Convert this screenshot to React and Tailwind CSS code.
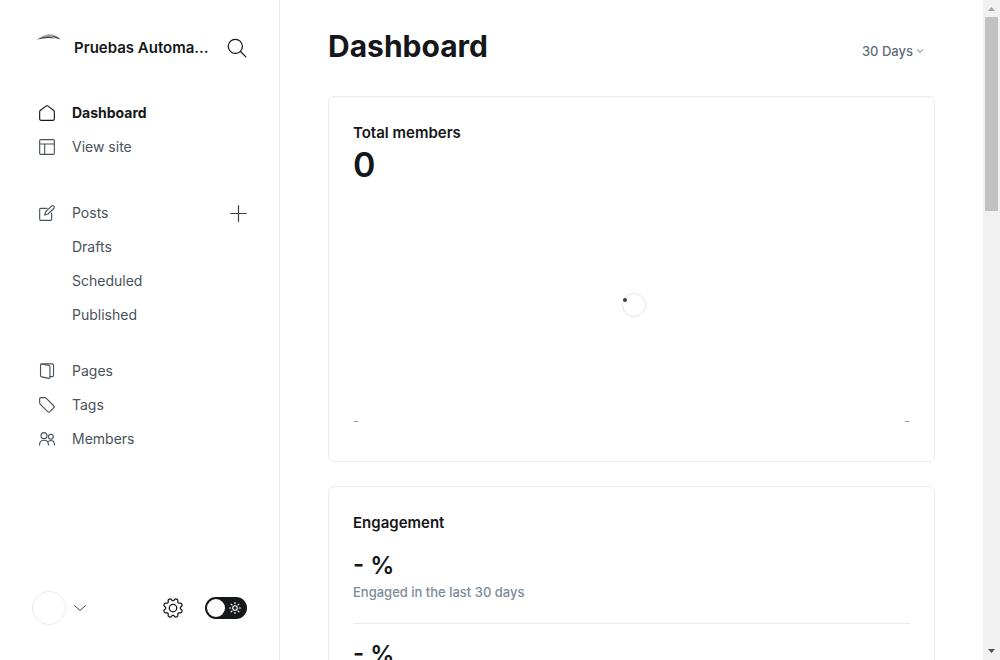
import React from "react";

function Icon({ className, children, strokeWidth = 1.5 }) {
  return (
    <svg
      viewBox="0 0 24 24"
      className={className}
      fill="none"
      stroke="currentColor"
      strokeWidth={strokeWidth}
      strokeLinecap="round"
      strokeLinejoin="round"
      aria-hidden="true"
    >
      {children}
    </svg>
  );
}

// Outline of a cog with eight rounded teeth, centred in a 24-unit box.
function cogPath() {
  const points = [];
  for (let i = 0; i < 160; i++) {
    const a = (i / 160) * Math.PI * 2;
    const r = 10.1 + 1.4 * Math.tanh(1.8 * Math.cos(8 * (a - Math.PI / 8)) + 0.3);
    points.push(`${(12 + r * Math.cos(a)).toFixed(2)} ${(12 + r * Math.sin(a)).toFixed(2)}`);
  }
  return `M${points.join("L")}z`;
}

const icons = {
  home: (
    <path d="M1 9.800v11.300c0 1 .8 1.900 1.900 1.900h18.200c1 0 1.900-.8 1.900-1.900V9.800c0-.6-.3-1.200-.8-1.500L13 1.300a1.800 1.800 0 0 0-2 0L1.800 8.300c-.5.300-.8.900-.8 1.500z" />
  ),
  site: (
    <>
      <rect x="1" y="1" width="22" height="22" rx="1.500" />
      <path d="M1 7.500h22M8.500 7.500V23" />
    </>
  ),
  posts: (
    <>
      <path d="M12 5H2.500A1.500 1.500 0 0 0 1 6.500v15A1.500 1.500 0 0 0 2.500 23h15a1.500 1.500 0 0 0 1.500-1.500V12" />
      <path d="m13.500 13.500-5 1.500 1.500-5L18.700 1.700a2.400 2.400 0 0 1 3.500 0 2.400 2.400 0 0 1 0 3.500z" />
    </>
  ),
  pages: (
    <>
      <path d="M3.800 1.500 14.500 3.600c1.100.2 1.900 1.100 1.900 2.200v15.500c0 1.100-.9 1.900-2 1.700L4 20.800a2 2 0 0 1-1.700-2V2.800c0-.9.700-1.500 1.500-1.300z" />
      <path d="M3.800 1.300h16a2 2 0 0 1 2 2v15.200a2 2 0 0 1-2 2h-3.400" />
    </>
  ),
  tags: (
    <path d="M1 2.500v6.300c0 .7.300 1.300.7 1.800L13.500 22.300c.7.700 1.800.7 2.500 0l6.300-6.300c.7-.7.7-1.800 0-2.500L10.600 1.700A2.500 2.500 0 0 0 8.800 1H2.500A1.500 1.500 0 0 0 1 2.500z" />
  ),
  members: (
    <>
      <circle cx="7.500" cy="7" r="4.500" />
      <circle cx="17.800" cy="8.500" r="3.600" />
      <path d="M.8 21c0-4.500 2.800-7.200 6.700-7.200s6.700 2.700 6.700 7.200M14.500 15.500c1-.8 2-1.200 3.300-1.200 3.100 0 5.400 2.400 5.400 6.700" />
    </>
  ),
};

function NavItem({ icon, label, active }) {
  return (
    <a
      href="#"
      aria-current={active ? "page" : undefined}
      className={
        active
          ? "flex h-[34px] items-center text-sm font-bold text-[#15171a]"
          : "flex h-[34px] items-center text-sm text-[#4a525a]"
      }
    >
      <span className="mr-4 flex w-[18px] shrink-0 justify-center">
        {icon && (
          <Icon className="size-4" strokeWidth={1.7}>
            {icons[icon]}
          </Icon>
        )}
      </span>
      {label}
    </a>
  );
}

function Sidebar() {
  return (
    <aside className="flex w-[280px] shrink-0 flex-col border-r border-[#e6e9eb] pt-8 pb-[35px]">
      <div className="flex h-8 items-center pr-8 pl-9">
        <svg viewBox="0 0 26 26" className="mr-3 size-[26px] shrink-0 overflow-visible" aria-hidden="true">
          <path d="M1 3.500C5 .5 9-1.500 13-2c5 .2 9 2 11.500 5-4-1.500-7-2-10.500-1.800C9 1.500 5 2.500 1 3.500z" transform="translate(0 1)" fill="#a9adad" />
          <path d="M1 4.500c4-2.300 8-3.300 12-3 2 .2 4 .9 6 2.300-3-.6-6-.9-9-.6-3 .3-6 .7-9 1.300zM15 .8c4 0 7 1.500 9.500 3.700-3-.5-6.500-1.700-9.500-3.700z" fill="#4d4f50" />
        </svg>
        <span className="min-w-0 flex-1 truncate text-[15px] font-semibold text-[#15171a]">
          Pruebas Automatizadas
        </span>
        <button type="button" aria-label="Search" className="ml-4 text-[#15171a]">
          <Icon className="size-5">
            <circle cx="10" cy="10" r="8.500" />
            <path d="m16.200 16.200 6.500 6.500" />
          </Icon>
        </button>
      </div>
      <nav className="flex flex-1 flex-col pt-8 pr-8 pl-[38px]">
        <NavItem icon="home" label="Dashboard" active />
        <NavItem icon="site" label="View site" />
        <div className="mt-8 flex items-center justify-between">
          <NavItem icon="posts" label="Posts" />
          <a href="#" aria-label="New post" className="text-[#394047]">
            <Icon className="size-[17px]" strokeWidth={1.7}>
              <path d="M12 1v22M1 12h22" />
            </Icon>
          </a>
        </div>
        <NavItem label="Drafts" />
        <NavItem label="Scheduled" />
        <NavItem label="Published" />
        <div className="mt-[22px] flex flex-col">
          <NavItem icon="pages" label="Pages" />
          <NavItem icon="tags" label="Tags" />
          <NavItem icon="members" label="Members" />
        </div>
      </nav>
      <div className="flex items-center px-8">
        <button type="button" aria-label="Account menu" className="flex items-center gap-2">
          <span className="size-[34px] rounded-full border border-[#e9ebed]" />
          <Icon className="size-3 text-[#394047]" strokeWidth={2}>
            <path d="m1 7 11 10L23 7" />
          </Icon>
        </button>
        <a href="#" aria-label="Settings" className="mr-[22px] ml-auto text-[#15171a]">
          <Icon className="size-5">
            <circle cx="12" cy="12" r="4.500" />
            <path d={cogPath()} />
          </Icon>
        </a>
        <label className="relative flex h-[22px] w-[42px] cursor-pointer items-center justify-between rounded-full bg-[#15171a] px-[2px]">
          <input type="checkbox" aria-label="Night mode" className="absolute inset-0 cursor-pointer appearance-none rounded-full" />
          <span className="size-[18px] rounded-full bg-white" />
          <Icon className="mr-1 size-3 text-white" strokeWidth={2.3}>
            <circle cx="12" cy="12" r="4.500" />
            <path d="M12 1v2.500M12 20.500V23M1 12h2.500M20.500 12H23M4.200 4.200 6 6M18 18l1.800 1.800M4.200 19.800 6 18M18 6l1.800-1.800" />
          </Icon>
        </label>
      </div>
    </aside>
  );
}

function Card({ title, children }) {
  return (
    <section className="rounded-md border border-[#e9ebed] p-6">
      <h2 className="text-[15px] leading-6 font-semibold">{title}</h2>
      {children}
    </section>
  );
}

function Stat({ value, label }) {
  return (
    <div className="border-b border-[#e9ebed] pt-[14px] pb-[21px]">
      <div className="text-2xl leading-[33px] font-semibold">{value}</div>
      <div className="text-[13px] leading-5 font-medium text-[#7c8b9a]">{label}</div>
    </div>
  );
}

function Scrollbar() {
  return (
    <div className="flex w-[17px] shrink-0 flex-col items-center bg-[#f1f1f1]" aria-hidden="true">
      <svg viewBox="0 0 17 17" className="h-[17px] w-[17px] shrink-0">
        <path d="M5 11h7L8.500 7z" fill="#a3a3a3" />
      </svg>
      <div className="h-[194px] w-[13px] bg-[#c1c1c1]" />
      <svg viewBox="0 0 17 17" className="mt-auto h-[17px] w-[17px] shrink-0">
        <path d="M5 6h7l-3.500 4z" fill="#505050" />
      </svg>
    </div>
  );
}

export default function App() {
  return (
    <div className="flex h-screen overflow-hidden bg-white font-['Inter',sans-serif] text-[#15171a]">
      <Sidebar />
      <main className="min-w-0 flex-1 overflow-hidden px-12 pt-6">
        <header className="mb-6 flex h-12 items-start justify-between">
          <h1 className="text-3xl leading-[44px] font-bold">Dashboard</h1>
          <div className="mt-[17px] mr-[11px] flex items-center gap-[3px] text-[#626d79]">
            <select
              aria-label="Time range"
              className="[field-sizing:content] appearance-none bg-transparent text-[13px] leading-5 font-medium"
            >
              <option>30 Days</option>
            </select>
            <Icon className="size-2" strokeWidth={3}>
              <path d="m4 8 8 8 8-8" />
            </Icon>
          </div>
        </header>
        <div className="flex flex-col gap-6">
          <Card title="Total members">
            <div className="text-[34px] leading-10 font-semibold">0</div>
            <div className="flex h-[224px] items-center justify-center pt-4 pr-[2px] pl-1">
              <svg viewBox="0 0 26 24" className="h-6 w-[26px]" role="img" aria-label="Loading">
                <circle cx="14" cy="12" r="11.500" fill="none" stroke="#e3e5e7" />
                <circle cx="5" cy="7" r="2" fill="#394047" />
              </svg>
            </div>
            <div className="flex justify-between pb-1 text-[13px] leading-6 text-[#95a1ad]">
              <span>-</span>
              <span>-</span>
            </div>
          </Card>
          <Card title="Engagement">
            <Stat value="- %" label="Engaged in the last 30 days" />
            <Stat value="- %" />
          </Card>
        </div>
      </main>
      <Scrollbar />
    </div>
  );
}
